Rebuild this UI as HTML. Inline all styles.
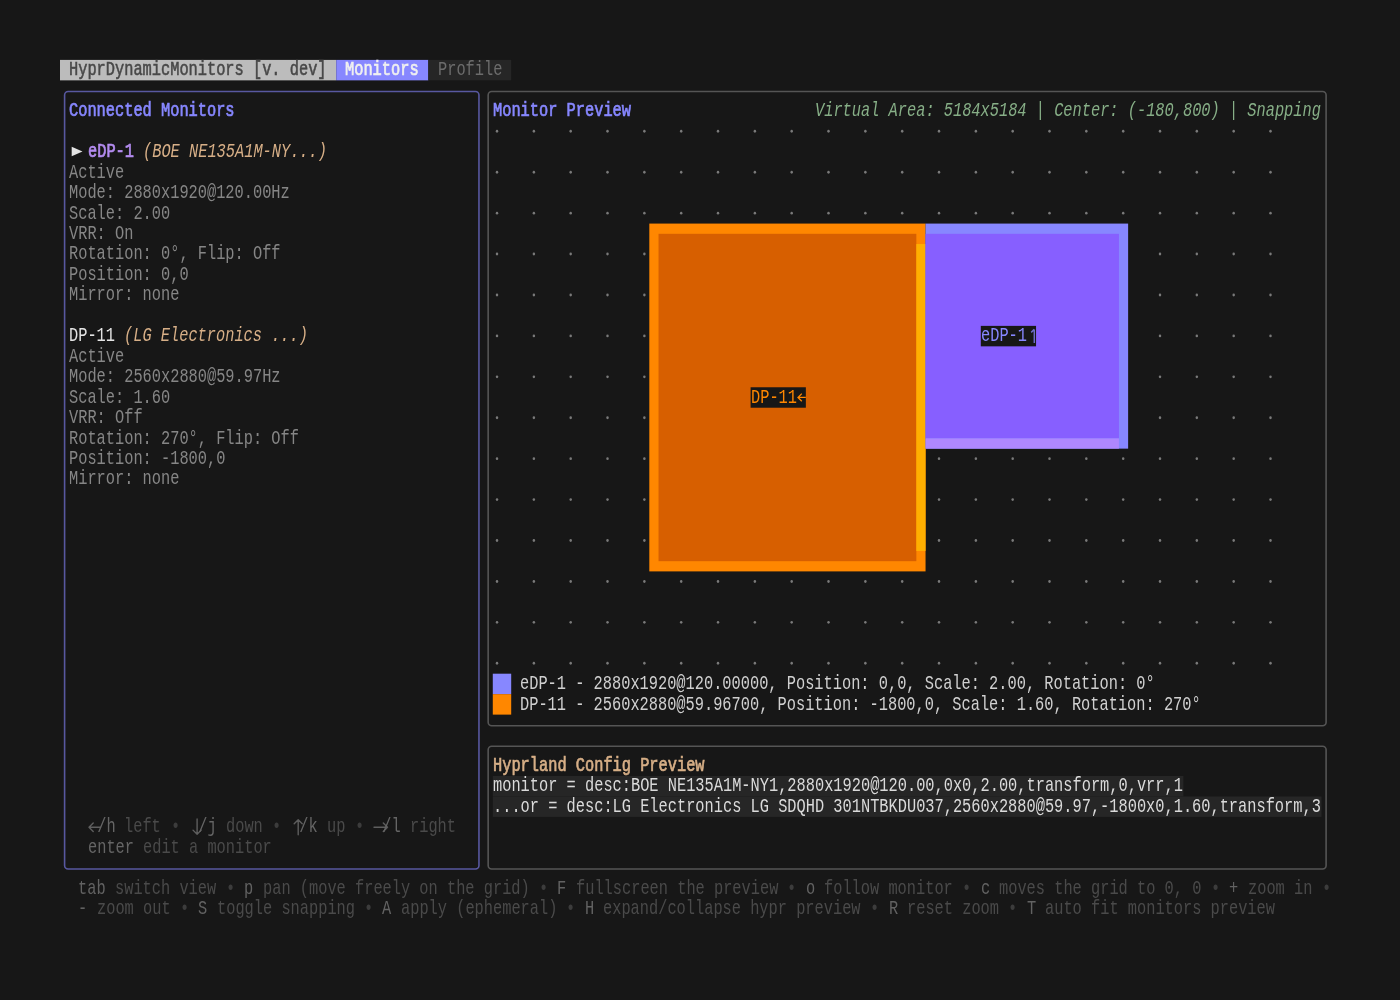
<!DOCTYPE html>
<html><head><meta charset="utf-8"><style>
html,body{margin:0;padding:0;background:#171717;width:1400px;height:1000px;overflow:hidden;}
svg{position:absolute;left:0;top:0;}
.t{position:absolute;white-space:pre;font-family:"Liberation Mono",monospace;font-size:15.344px;line-height:28px;height:28px;transform:scaleY(1.27);transform-origin:0 18px;will-change:transform;}
</style></head><body>
<svg width="1400" height="1000" viewBox="0 0 1400 1000">
<rect x="60.00" y="59.90" width="276.24" height="20.46" fill="#bcbcbc"/>
<rect x="336.24" y="59.90" width="92.08" height="20.46" fill="#8787ff"/>
<rect x="428.32" y="59.90" width="82.87" height="20.46" fill="#262626"/>
<rect x="64.60" y="91.49" width="414.36" height="777.48" rx="3.5" ry="3.5" fill="none" stroke="#5858a0" stroke-width="1.6"/>
<rect x="488.17" y="91.49" width="837.93" height="634.26" rx="3.5" ry="3.5" fill="none" stroke="#555555" stroke-width="1.6"/>
<rect x="488.17" y="746.21" width="837.93" height="122.76" rx="3.5" ry="3.5" fill="none" stroke="#555555" stroke-width="1.6"/>
<polygon points="71.7,146.74 82.5,151.44 71.7,156.14" fill="#e4e4e4"/>
<path d="M100.5,827.22 H89 M93.2,823.02 L89,827.22 L93.2,831.42 M197.1,818.92 V834.22 M193,830.12 L197.1,834.22 L201.2,830.12 M298.2,834.72 V819.72 M294.2,823.72 L298.2,819.72 L302.2,823.72 M374,827.22 H387.5 M383.3,823.02 L387.5,827.22 L383.3,831.42" stroke="#5e5e5e" stroke-width="1.4" fill="none" stroke-linecap="round" stroke-linejoin="round"/>
<ellipse cx="497.03" cy="131.31" rx="1.25" ry="1.45" fill="#7a7a7a"/>
<ellipse cx="533.86" cy="131.31" rx="1.25" ry="1.45" fill="#7a7a7a"/>
<ellipse cx="570.69" cy="131.31" rx="1.25" ry="1.45" fill="#7a7a7a"/>
<ellipse cx="607.53" cy="131.31" rx="1.25" ry="1.45" fill="#7a7a7a"/>
<ellipse cx="644.36" cy="131.31" rx="1.25" ry="1.45" fill="#7a7a7a"/>
<ellipse cx="681.19" cy="131.31" rx="1.25" ry="1.45" fill="#7a7a7a"/>
<ellipse cx="718.02" cy="131.31" rx="1.25" ry="1.45" fill="#7a7a7a"/>
<ellipse cx="754.85" cy="131.31" rx="1.25" ry="1.45" fill="#7a7a7a"/>
<ellipse cx="791.69" cy="131.31" rx="1.25" ry="1.45" fill="#7a7a7a"/>
<ellipse cx="828.52" cy="131.31" rx="1.25" ry="1.45" fill="#7a7a7a"/>
<ellipse cx="865.35" cy="131.31" rx="1.25" ry="1.45" fill="#7a7a7a"/>
<ellipse cx="902.18" cy="131.31" rx="1.25" ry="1.45" fill="#7a7a7a"/>
<ellipse cx="939.01" cy="131.31" rx="1.25" ry="1.45" fill="#7a7a7a"/>
<ellipse cx="975.85" cy="131.31" rx="1.25" ry="1.45" fill="#7a7a7a"/>
<ellipse cx="1012.68" cy="131.31" rx="1.25" ry="1.45" fill="#7a7a7a"/>
<ellipse cx="1049.51" cy="131.31" rx="1.25" ry="1.45" fill="#7a7a7a"/>
<ellipse cx="1086.34" cy="131.31" rx="1.25" ry="1.45" fill="#7a7a7a"/>
<ellipse cx="1123.17" cy="131.31" rx="1.25" ry="1.45" fill="#7a7a7a"/>
<ellipse cx="1160.01" cy="131.31" rx="1.25" ry="1.45" fill="#7a7a7a"/>
<ellipse cx="1196.84" cy="131.31" rx="1.25" ry="1.45" fill="#7a7a7a"/>
<ellipse cx="1233.67" cy="131.31" rx="1.25" ry="1.45" fill="#7a7a7a"/>
<ellipse cx="1270.50" cy="131.31" rx="1.25" ry="1.45" fill="#7a7a7a"/>
<ellipse cx="497.03" cy="172.23" rx="1.25" ry="1.45" fill="#7a7a7a"/>
<ellipse cx="533.86" cy="172.23" rx="1.25" ry="1.45" fill="#7a7a7a"/>
<ellipse cx="570.69" cy="172.23" rx="1.25" ry="1.45" fill="#7a7a7a"/>
<ellipse cx="607.53" cy="172.23" rx="1.25" ry="1.45" fill="#7a7a7a"/>
<ellipse cx="644.36" cy="172.23" rx="1.25" ry="1.45" fill="#7a7a7a"/>
<ellipse cx="681.19" cy="172.23" rx="1.25" ry="1.45" fill="#7a7a7a"/>
<ellipse cx="718.02" cy="172.23" rx="1.25" ry="1.45" fill="#7a7a7a"/>
<ellipse cx="754.85" cy="172.23" rx="1.25" ry="1.45" fill="#7a7a7a"/>
<ellipse cx="791.69" cy="172.23" rx="1.25" ry="1.45" fill="#7a7a7a"/>
<ellipse cx="828.52" cy="172.23" rx="1.25" ry="1.45" fill="#7a7a7a"/>
<ellipse cx="865.35" cy="172.23" rx="1.25" ry="1.45" fill="#7a7a7a"/>
<ellipse cx="902.18" cy="172.23" rx="1.25" ry="1.45" fill="#7a7a7a"/>
<ellipse cx="939.01" cy="172.23" rx="1.25" ry="1.45" fill="#7a7a7a"/>
<ellipse cx="975.85" cy="172.23" rx="1.25" ry="1.45" fill="#7a7a7a"/>
<ellipse cx="1012.68" cy="172.23" rx="1.25" ry="1.45" fill="#7a7a7a"/>
<ellipse cx="1049.51" cy="172.23" rx="1.25" ry="1.45" fill="#7a7a7a"/>
<ellipse cx="1086.34" cy="172.23" rx="1.25" ry="1.45" fill="#7a7a7a"/>
<ellipse cx="1123.17" cy="172.23" rx="1.25" ry="1.45" fill="#7a7a7a"/>
<ellipse cx="1160.01" cy="172.23" rx="1.25" ry="1.45" fill="#7a7a7a"/>
<ellipse cx="1196.84" cy="172.23" rx="1.25" ry="1.45" fill="#7a7a7a"/>
<ellipse cx="1233.67" cy="172.23" rx="1.25" ry="1.45" fill="#7a7a7a"/>
<ellipse cx="1270.50" cy="172.23" rx="1.25" ry="1.45" fill="#7a7a7a"/>
<ellipse cx="497.03" cy="213.15" rx="1.25" ry="1.45" fill="#7a7a7a"/>
<ellipse cx="533.86" cy="213.15" rx="1.25" ry="1.45" fill="#7a7a7a"/>
<ellipse cx="570.69" cy="213.15" rx="1.25" ry="1.45" fill="#7a7a7a"/>
<ellipse cx="607.53" cy="213.15" rx="1.25" ry="1.45" fill="#7a7a7a"/>
<ellipse cx="644.36" cy="213.15" rx="1.25" ry="1.45" fill="#7a7a7a"/>
<ellipse cx="681.19" cy="213.15" rx="1.25" ry="1.45" fill="#7a7a7a"/>
<ellipse cx="718.02" cy="213.15" rx="1.25" ry="1.45" fill="#7a7a7a"/>
<ellipse cx="754.85" cy="213.15" rx="1.25" ry="1.45" fill="#7a7a7a"/>
<ellipse cx="791.69" cy="213.15" rx="1.25" ry="1.45" fill="#7a7a7a"/>
<ellipse cx="828.52" cy="213.15" rx="1.25" ry="1.45" fill="#7a7a7a"/>
<ellipse cx="865.35" cy="213.15" rx="1.25" ry="1.45" fill="#7a7a7a"/>
<ellipse cx="902.18" cy="213.15" rx="1.25" ry="1.45" fill="#7a7a7a"/>
<ellipse cx="939.01" cy="213.15" rx="1.25" ry="1.45" fill="#7a7a7a"/>
<ellipse cx="975.85" cy="213.15" rx="1.25" ry="1.45" fill="#7a7a7a"/>
<ellipse cx="1012.68" cy="213.15" rx="1.25" ry="1.45" fill="#7a7a7a"/>
<ellipse cx="1049.51" cy="213.15" rx="1.25" ry="1.45" fill="#7a7a7a"/>
<ellipse cx="1086.34" cy="213.15" rx="1.25" ry="1.45" fill="#7a7a7a"/>
<ellipse cx="1123.17" cy="213.15" rx="1.25" ry="1.45" fill="#7a7a7a"/>
<ellipse cx="1160.01" cy="213.15" rx="1.25" ry="1.45" fill="#7a7a7a"/>
<ellipse cx="1196.84" cy="213.15" rx="1.25" ry="1.45" fill="#7a7a7a"/>
<ellipse cx="1233.67" cy="213.15" rx="1.25" ry="1.45" fill="#7a7a7a"/>
<ellipse cx="1270.50" cy="213.15" rx="1.25" ry="1.45" fill="#7a7a7a"/>
<ellipse cx="497.03" cy="254.07" rx="1.25" ry="1.45" fill="#7a7a7a"/>
<ellipse cx="533.86" cy="254.07" rx="1.25" ry="1.45" fill="#7a7a7a"/>
<ellipse cx="570.69" cy="254.07" rx="1.25" ry="1.45" fill="#7a7a7a"/>
<ellipse cx="607.53" cy="254.07" rx="1.25" ry="1.45" fill="#7a7a7a"/>
<ellipse cx="644.36" cy="254.07" rx="1.25" ry="1.45" fill="#7a7a7a"/>
<ellipse cx="1160.01" cy="254.07" rx="1.25" ry="1.45" fill="#7a7a7a"/>
<ellipse cx="1196.84" cy="254.07" rx="1.25" ry="1.45" fill="#7a7a7a"/>
<ellipse cx="1233.67" cy="254.07" rx="1.25" ry="1.45" fill="#7a7a7a"/>
<ellipse cx="1270.50" cy="254.07" rx="1.25" ry="1.45" fill="#7a7a7a"/>
<ellipse cx="497.03" cy="294.99" rx="1.25" ry="1.45" fill="#7a7a7a"/>
<ellipse cx="533.86" cy="294.99" rx="1.25" ry="1.45" fill="#7a7a7a"/>
<ellipse cx="570.69" cy="294.99" rx="1.25" ry="1.45" fill="#7a7a7a"/>
<ellipse cx="607.53" cy="294.99" rx="1.25" ry="1.45" fill="#7a7a7a"/>
<ellipse cx="644.36" cy="294.99" rx="1.25" ry="1.45" fill="#7a7a7a"/>
<ellipse cx="1160.01" cy="294.99" rx="1.25" ry="1.45" fill="#7a7a7a"/>
<ellipse cx="1196.84" cy="294.99" rx="1.25" ry="1.45" fill="#7a7a7a"/>
<ellipse cx="1233.67" cy="294.99" rx="1.25" ry="1.45" fill="#7a7a7a"/>
<ellipse cx="1270.50" cy="294.99" rx="1.25" ry="1.45" fill="#7a7a7a"/>
<ellipse cx="497.03" cy="335.91" rx="1.25" ry="1.45" fill="#7a7a7a"/>
<ellipse cx="533.86" cy="335.91" rx="1.25" ry="1.45" fill="#7a7a7a"/>
<ellipse cx="570.69" cy="335.91" rx="1.25" ry="1.45" fill="#7a7a7a"/>
<ellipse cx="607.53" cy="335.91" rx="1.25" ry="1.45" fill="#7a7a7a"/>
<ellipse cx="644.36" cy="335.91" rx="1.25" ry="1.45" fill="#7a7a7a"/>
<ellipse cx="1160.01" cy="335.91" rx="1.25" ry="1.45" fill="#7a7a7a"/>
<ellipse cx="1196.84" cy="335.91" rx="1.25" ry="1.45" fill="#7a7a7a"/>
<ellipse cx="1233.67" cy="335.91" rx="1.25" ry="1.45" fill="#7a7a7a"/>
<ellipse cx="1270.50" cy="335.91" rx="1.25" ry="1.45" fill="#7a7a7a"/>
<ellipse cx="497.03" cy="376.83" rx="1.25" ry="1.45" fill="#7a7a7a"/>
<ellipse cx="533.86" cy="376.83" rx="1.25" ry="1.45" fill="#7a7a7a"/>
<ellipse cx="570.69" cy="376.83" rx="1.25" ry="1.45" fill="#7a7a7a"/>
<ellipse cx="607.53" cy="376.83" rx="1.25" ry="1.45" fill="#7a7a7a"/>
<ellipse cx="644.36" cy="376.83" rx="1.25" ry="1.45" fill="#7a7a7a"/>
<ellipse cx="1160.01" cy="376.83" rx="1.25" ry="1.45" fill="#7a7a7a"/>
<ellipse cx="1196.84" cy="376.83" rx="1.25" ry="1.45" fill="#7a7a7a"/>
<ellipse cx="1233.67" cy="376.83" rx="1.25" ry="1.45" fill="#7a7a7a"/>
<ellipse cx="1270.50" cy="376.83" rx="1.25" ry="1.45" fill="#7a7a7a"/>
<ellipse cx="497.03" cy="417.75" rx="1.25" ry="1.45" fill="#7a7a7a"/>
<ellipse cx="533.86" cy="417.75" rx="1.25" ry="1.45" fill="#7a7a7a"/>
<ellipse cx="570.69" cy="417.75" rx="1.25" ry="1.45" fill="#7a7a7a"/>
<ellipse cx="607.53" cy="417.75" rx="1.25" ry="1.45" fill="#7a7a7a"/>
<ellipse cx="644.36" cy="417.75" rx="1.25" ry="1.45" fill="#7a7a7a"/>
<ellipse cx="1160.01" cy="417.75" rx="1.25" ry="1.45" fill="#7a7a7a"/>
<ellipse cx="1196.84" cy="417.75" rx="1.25" ry="1.45" fill="#7a7a7a"/>
<ellipse cx="1233.67" cy="417.75" rx="1.25" ry="1.45" fill="#7a7a7a"/>
<ellipse cx="1270.50" cy="417.75" rx="1.25" ry="1.45" fill="#7a7a7a"/>
<ellipse cx="497.03" cy="458.67" rx="1.25" ry="1.45" fill="#7a7a7a"/>
<ellipse cx="533.86" cy="458.67" rx="1.25" ry="1.45" fill="#7a7a7a"/>
<ellipse cx="570.69" cy="458.67" rx="1.25" ry="1.45" fill="#7a7a7a"/>
<ellipse cx="607.53" cy="458.67" rx="1.25" ry="1.45" fill="#7a7a7a"/>
<ellipse cx="644.36" cy="458.67" rx="1.25" ry="1.45" fill="#7a7a7a"/>
<ellipse cx="939.01" cy="458.67" rx="1.25" ry="1.45" fill="#7a7a7a"/>
<ellipse cx="975.85" cy="458.67" rx="1.25" ry="1.45" fill="#7a7a7a"/>
<ellipse cx="1012.68" cy="458.67" rx="1.25" ry="1.45" fill="#7a7a7a"/>
<ellipse cx="1049.51" cy="458.67" rx="1.25" ry="1.45" fill="#7a7a7a"/>
<ellipse cx="1086.34" cy="458.67" rx="1.25" ry="1.45" fill="#7a7a7a"/>
<ellipse cx="1123.17" cy="458.67" rx="1.25" ry="1.45" fill="#7a7a7a"/>
<ellipse cx="1160.01" cy="458.67" rx="1.25" ry="1.45" fill="#7a7a7a"/>
<ellipse cx="1196.84" cy="458.67" rx="1.25" ry="1.45" fill="#7a7a7a"/>
<ellipse cx="1233.67" cy="458.67" rx="1.25" ry="1.45" fill="#7a7a7a"/>
<ellipse cx="1270.50" cy="458.67" rx="1.25" ry="1.45" fill="#7a7a7a"/>
<ellipse cx="497.03" cy="499.59" rx="1.25" ry="1.45" fill="#7a7a7a"/>
<ellipse cx="533.86" cy="499.59" rx="1.25" ry="1.45" fill="#7a7a7a"/>
<ellipse cx="570.69" cy="499.59" rx="1.25" ry="1.45" fill="#7a7a7a"/>
<ellipse cx="607.53" cy="499.59" rx="1.25" ry="1.45" fill="#7a7a7a"/>
<ellipse cx="644.36" cy="499.59" rx="1.25" ry="1.45" fill="#7a7a7a"/>
<ellipse cx="939.01" cy="499.59" rx="1.25" ry="1.45" fill="#7a7a7a"/>
<ellipse cx="975.85" cy="499.59" rx="1.25" ry="1.45" fill="#7a7a7a"/>
<ellipse cx="1012.68" cy="499.59" rx="1.25" ry="1.45" fill="#7a7a7a"/>
<ellipse cx="1049.51" cy="499.59" rx="1.25" ry="1.45" fill="#7a7a7a"/>
<ellipse cx="1086.34" cy="499.59" rx="1.25" ry="1.45" fill="#7a7a7a"/>
<ellipse cx="1123.17" cy="499.59" rx="1.25" ry="1.45" fill="#7a7a7a"/>
<ellipse cx="1160.01" cy="499.59" rx="1.25" ry="1.45" fill="#7a7a7a"/>
<ellipse cx="1196.84" cy="499.59" rx="1.25" ry="1.45" fill="#7a7a7a"/>
<ellipse cx="1233.67" cy="499.59" rx="1.25" ry="1.45" fill="#7a7a7a"/>
<ellipse cx="1270.50" cy="499.59" rx="1.25" ry="1.45" fill="#7a7a7a"/>
<ellipse cx="497.03" cy="540.51" rx="1.25" ry="1.45" fill="#7a7a7a"/>
<ellipse cx="533.86" cy="540.51" rx="1.25" ry="1.45" fill="#7a7a7a"/>
<ellipse cx="570.69" cy="540.51" rx="1.25" ry="1.45" fill="#7a7a7a"/>
<ellipse cx="607.53" cy="540.51" rx="1.25" ry="1.45" fill="#7a7a7a"/>
<ellipse cx="644.36" cy="540.51" rx="1.25" ry="1.45" fill="#7a7a7a"/>
<ellipse cx="939.01" cy="540.51" rx="1.25" ry="1.45" fill="#7a7a7a"/>
<ellipse cx="975.85" cy="540.51" rx="1.25" ry="1.45" fill="#7a7a7a"/>
<ellipse cx="1012.68" cy="540.51" rx="1.25" ry="1.45" fill="#7a7a7a"/>
<ellipse cx="1049.51" cy="540.51" rx="1.25" ry="1.45" fill="#7a7a7a"/>
<ellipse cx="1086.34" cy="540.51" rx="1.25" ry="1.45" fill="#7a7a7a"/>
<ellipse cx="1123.17" cy="540.51" rx="1.25" ry="1.45" fill="#7a7a7a"/>
<ellipse cx="1160.01" cy="540.51" rx="1.25" ry="1.45" fill="#7a7a7a"/>
<ellipse cx="1196.84" cy="540.51" rx="1.25" ry="1.45" fill="#7a7a7a"/>
<ellipse cx="1233.67" cy="540.51" rx="1.25" ry="1.45" fill="#7a7a7a"/>
<ellipse cx="1270.50" cy="540.51" rx="1.25" ry="1.45" fill="#7a7a7a"/>
<ellipse cx="497.03" cy="581.43" rx="1.25" ry="1.45" fill="#7a7a7a"/>
<ellipse cx="533.86" cy="581.43" rx="1.25" ry="1.45" fill="#7a7a7a"/>
<ellipse cx="570.69" cy="581.43" rx="1.25" ry="1.45" fill="#7a7a7a"/>
<ellipse cx="607.53" cy="581.43" rx="1.25" ry="1.45" fill="#7a7a7a"/>
<ellipse cx="644.36" cy="581.43" rx="1.25" ry="1.45" fill="#7a7a7a"/>
<ellipse cx="681.19" cy="581.43" rx="1.25" ry="1.45" fill="#7a7a7a"/>
<ellipse cx="718.02" cy="581.43" rx="1.25" ry="1.45" fill="#7a7a7a"/>
<ellipse cx="754.85" cy="581.43" rx="1.25" ry="1.45" fill="#7a7a7a"/>
<ellipse cx="791.69" cy="581.43" rx="1.25" ry="1.45" fill="#7a7a7a"/>
<ellipse cx="828.52" cy="581.43" rx="1.25" ry="1.45" fill="#7a7a7a"/>
<ellipse cx="865.35" cy="581.43" rx="1.25" ry="1.45" fill="#7a7a7a"/>
<ellipse cx="902.18" cy="581.43" rx="1.25" ry="1.45" fill="#7a7a7a"/>
<ellipse cx="939.01" cy="581.43" rx="1.25" ry="1.45" fill="#7a7a7a"/>
<ellipse cx="975.85" cy="581.43" rx="1.25" ry="1.45" fill="#7a7a7a"/>
<ellipse cx="1012.68" cy="581.43" rx="1.25" ry="1.45" fill="#7a7a7a"/>
<ellipse cx="1049.51" cy="581.43" rx="1.25" ry="1.45" fill="#7a7a7a"/>
<ellipse cx="1086.34" cy="581.43" rx="1.25" ry="1.45" fill="#7a7a7a"/>
<ellipse cx="1123.17" cy="581.43" rx="1.25" ry="1.45" fill="#7a7a7a"/>
<ellipse cx="1160.01" cy="581.43" rx="1.25" ry="1.45" fill="#7a7a7a"/>
<ellipse cx="1196.84" cy="581.43" rx="1.25" ry="1.45" fill="#7a7a7a"/>
<ellipse cx="1233.67" cy="581.43" rx="1.25" ry="1.45" fill="#7a7a7a"/>
<ellipse cx="1270.50" cy="581.43" rx="1.25" ry="1.45" fill="#7a7a7a"/>
<ellipse cx="497.03" cy="622.35" rx="1.25" ry="1.45" fill="#7a7a7a"/>
<ellipse cx="533.86" cy="622.35" rx="1.25" ry="1.45" fill="#7a7a7a"/>
<ellipse cx="570.69" cy="622.35" rx="1.25" ry="1.45" fill="#7a7a7a"/>
<ellipse cx="607.53" cy="622.35" rx="1.25" ry="1.45" fill="#7a7a7a"/>
<ellipse cx="644.36" cy="622.35" rx="1.25" ry="1.45" fill="#7a7a7a"/>
<ellipse cx="681.19" cy="622.35" rx="1.25" ry="1.45" fill="#7a7a7a"/>
<ellipse cx="718.02" cy="622.35" rx="1.25" ry="1.45" fill="#7a7a7a"/>
<ellipse cx="754.85" cy="622.35" rx="1.25" ry="1.45" fill="#7a7a7a"/>
<ellipse cx="791.69" cy="622.35" rx="1.25" ry="1.45" fill="#7a7a7a"/>
<ellipse cx="828.52" cy="622.35" rx="1.25" ry="1.45" fill="#7a7a7a"/>
<ellipse cx="865.35" cy="622.35" rx="1.25" ry="1.45" fill="#7a7a7a"/>
<ellipse cx="902.18" cy="622.35" rx="1.25" ry="1.45" fill="#7a7a7a"/>
<ellipse cx="939.01" cy="622.35" rx="1.25" ry="1.45" fill="#7a7a7a"/>
<ellipse cx="975.85" cy="622.35" rx="1.25" ry="1.45" fill="#7a7a7a"/>
<ellipse cx="1012.68" cy="622.35" rx="1.25" ry="1.45" fill="#7a7a7a"/>
<ellipse cx="1049.51" cy="622.35" rx="1.25" ry="1.45" fill="#7a7a7a"/>
<ellipse cx="1086.34" cy="622.35" rx="1.25" ry="1.45" fill="#7a7a7a"/>
<ellipse cx="1123.17" cy="622.35" rx="1.25" ry="1.45" fill="#7a7a7a"/>
<ellipse cx="1160.01" cy="622.35" rx="1.25" ry="1.45" fill="#7a7a7a"/>
<ellipse cx="1196.84" cy="622.35" rx="1.25" ry="1.45" fill="#7a7a7a"/>
<ellipse cx="1233.67" cy="622.35" rx="1.25" ry="1.45" fill="#7a7a7a"/>
<ellipse cx="1270.50" cy="622.35" rx="1.25" ry="1.45" fill="#7a7a7a"/>
<ellipse cx="497.03" cy="663.27" rx="1.25" ry="1.45" fill="#7a7a7a"/>
<ellipse cx="533.86" cy="663.27" rx="1.25" ry="1.45" fill="#7a7a7a"/>
<ellipse cx="570.69" cy="663.27" rx="1.25" ry="1.45" fill="#7a7a7a"/>
<ellipse cx="607.53" cy="663.27" rx="1.25" ry="1.45" fill="#7a7a7a"/>
<ellipse cx="644.36" cy="663.27" rx="1.25" ry="1.45" fill="#7a7a7a"/>
<ellipse cx="681.19" cy="663.27" rx="1.25" ry="1.45" fill="#7a7a7a"/>
<ellipse cx="718.02" cy="663.27" rx="1.25" ry="1.45" fill="#7a7a7a"/>
<ellipse cx="754.85" cy="663.27" rx="1.25" ry="1.45" fill="#7a7a7a"/>
<ellipse cx="791.69" cy="663.27" rx="1.25" ry="1.45" fill="#7a7a7a"/>
<ellipse cx="828.52" cy="663.27" rx="1.25" ry="1.45" fill="#7a7a7a"/>
<ellipse cx="865.35" cy="663.27" rx="1.25" ry="1.45" fill="#7a7a7a"/>
<ellipse cx="902.18" cy="663.27" rx="1.25" ry="1.45" fill="#7a7a7a"/>
<ellipse cx="939.01" cy="663.27" rx="1.25" ry="1.45" fill="#7a7a7a"/>
<ellipse cx="975.85" cy="663.27" rx="1.25" ry="1.45" fill="#7a7a7a"/>
<ellipse cx="1012.68" cy="663.27" rx="1.25" ry="1.45" fill="#7a7a7a"/>
<ellipse cx="1049.51" cy="663.27" rx="1.25" ry="1.45" fill="#7a7a7a"/>
<ellipse cx="1086.34" cy="663.27" rx="1.25" ry="1.45" fill="#7a7a7a"/>
<ellipse cx="1123.17" cy="663.27" rx="1.25" ry="1.45" fill="#7a7a7a"/>
<ellipse cx="1160.01" cy="663.27" rx="1.25" ry="1.45" fill="#7a7a7a"/>
<ellipse cx="1196.84" cy="663.27" rx="1.25" ry="1.45" fill="#7a7a7a"/>
<ellipse cx="1233.67" cy="663.27" rx="1.25" ry="1.45" fill="#7a7a7a"/>
<ellipse cx="1270.50" cy="663.27" rx="1.25" ry="1.45" fill="#7a7a7a"/>
<rect x="649.31" y="223.58" width="276.24" height="347.82" fill="#ff8700"/>
<rect x="658.52" y="233.81" width="257.82" height="327.36" fill="#d75f00"/>
<rect x="916.34" y="244.04" width="9.21" height="306.90" fill="#ffaf00"/>
<rect x="925.55" y="223.58" width="202.58" height="225.06" fill="#8787ff"/>
<rect x="925.55" y="233.81" width="193.37" height="204.60" fill="#875fff"/>
<rect x="925.55" y="438.41" width="193.37" height="10.23" fill="#af87ff"/>
<rect x="750.60" y="387.26" width="55.25" height="20.46" fill="#171717"/>
<path d="M805.8,397.46 H798 M801.8,393.66 L798,397.46 L801.8,401.26" stroke="#ff8700" stroke-width="1.3" fill="none"/>
<rect x="980.80" y="325.88" width="55.25" height="20.46" fill="#171717"/>
<path d="M1034.3,329.38 V342.88 M1031.2,332.38 L1034.3,329.38" stroke="#6c6cc8" stroke-width="1.5" fill="none"/>
<rect x="492.78" y="673.70" width="18.42" height="20.46" fill="#8787ff"/>
<rect x="492.78" y="694.16" width="18.42" height="20.46" fill="#ff8700"/>
<rect x="492.78" y="776.00" width="690.60" height="20.46" fill="#262626"/>
<rect x="492.78" y="796.46" width="828.72" height="20.46" fill="#262626"/>
</svg>
<div class="t" style="left:69.21px;top:57px;color:#484848;-webkit-text-stroke:0.45px #484848;">HyprDynamicMonitors [v. dev]</div>
<div class="t" style="left:345.45px;top:57px;color:#f0f0f0;-webkit-text-stroke:0.55px #f0f0f0;">Monitors</div>
<div class="t" style="left:437.53px;top:57px;color:#6c6c6c;">Profile</div>
<div class="t" style="left:69.21px;top:98px;color:#8787ff;-webkit-text-stroke:0.55px #8787ff;">Connected Monitors</div>
<div class="t" style="left:87.62px;top:139px;color:#b48cf0;-webkit-text-stroke:0.55px #b48cf0;">eDP-1</div>
<div class="t" style="left:142.87px;top:139px;color:#d7af87;font-style:italic;">(BOE NE135A1M-NY...)</div>
<div class="t" style="left:69.21px;top:160px;color:#868686;">Active</div>
<div class="t" style="left:69.21px;top:180px;color:#868686;">Mode: 2880x1920@120.00Hz</div>
<div class="t" style="left:69.21px;top:201px;color:#868686;">Scale: 2.00</div>
<div class="t" style="left:69.21px;top:221px;color:#868686;">VRR: On</div>
<div class="t" style="left:69.21px;top:241px;color:#868686;">Rotation: 0°, Flip: Off</div>
<div class="t" style="left:69.21px;top:262px;color:#868686;">Position: 0,0</div>
<div class="t" style="left:69.21px;top:282px;color:#868686;">Mirror: none</div>
<div class="t" style="left:69.21px;top:323px;color:#e4e4e4;">DP-11</div>
<div class="t" style="left:124.46px;top:323px;color:#d7af87;font-style:italic;">(LG Electronics ...)</div>
<div class="t" style="left:69.21px;top:344px;color:#868686;">Active</div>
<div class="t" style="left:69.21px;top:364px;color:#868686;">Mode: 2560x2880@59.97Hz</div>
<div class="t" style="left:69.21px;top:385px;color:#868686;">Scale: 1.60</div>
<div class="t" style="left:69.21px;top:405px;color:#868686;">VRR: Off</div>
<div class="t" style="left:69.21px;top:426px;color:#868686;">Rotation: 270°, Flip: Off</div>
<div class="t" style="left:69.21px;top:446px;color:#868686;">Position: -1800,0</div>
<div class="t" style="left:69.21px;top:466px;color:#868686;">Mirror: none</div>
<div class="t" style="left:87.62px;top:814px;color:#656565;"> /h</div>
<div class="t" style="left:124.46px;top:814px;color:#4a4a4a;">left</div>
<div class="t" style="left:170.50px;top:814px;color:#3c3c3c;">•</div>
<div class="t" style="left:188.91px;top:814px;color:#656565;"> /j</div>
<div class="t" style="left:225.74px;top:814px;color:#4a4a4a;">down</div>
<div class="t" style="left:271.78px;top:814px;color:#3c3c3c;">•</div>
<div class="t" style="left:290.20px;top:814px;color:#656565;"> /k</div>
<div class="t" style="left:327.03px;top:814px;color:#4a4a4a;">up</div>
<div class="t" style="left:354.66px;top:814px;color:#3c3c3c;">•</div>
<div class="t" style="left:373.07px;top:814px;color:#656565;"> /l</div>
<div class="t" style="left:409.90px;top:814px;color:#4a4a4a;">right</div>
<div class="t" style="left:87.62px;top:835px;color:#656565;">enter</div>
<div class="t" style="left:142.87px;top:835px;color:#4a4a4a;">edit a monitor</div>
<div class="t" style="left:492.78px;top:98px;color:#8787ff;-webkit-text-stroke:0.55px #8787ff;">Monitor Preview</div>
<div class="t" style="left:815.06px;top:98px;color:#87af87;font-style:italic;">Virtual Area: 5184x5184 | Center: (-180,800) | Snapping</div>
<div class="t" style="left:750.60px;top:385px;color:#ff8700;">DP-11</div>
<div class="t" style="left:980.80px;top:323px;color:#8787ff;">eDP-1</div>
<div class="t" style="left:520.40px;top:671px;color:#d0d0d0;">eDP-1 - 2880x1920@120.00000, Position: 0,0, Scale: 2.00, Rotation: 0°</div>
<div class="t" style="left:520.40px;top:692px;color:#d0d0d0;">DP-11 - 2560x2880@59.96700, Position: -1800,0, Scale: 1.60, Rotation: 270°</div>
<div class="t" style="left:492.78px;top:753px;color:#d7af87;-webkit-text-stroke:0.55px #d7af87;">Hyprland Config Preview</div>
<div class="t" style="left:492.78px;top:773px;color:#dadada;">monitor = desc:BOE NE135A1M-NY1,2880x1920@120.00,0x0,2.00,transform,0,vrr,1</div>
<div class="t" style="left:492.78px;top:794px;color:#dadada;">...or = desc:LG Electronics LG SDQHD 301NTBKDU037,2560x2880@59.97,-1800x0,1.60,transform,3</div>
<div class="t" style="left:78.42px;top:876px;color:#626262;">tab</div>
<div class="t" style="left:115.25px;top:876px;color:#4a4a4a;">switch view</div>
<div class="t" style="left:225.74px;top:876px;color:#3c3c3c;">•</div>
<div class="t" style="left:244.16px;top:876px;color:#626262;">p</div>
<div class="t" style="left:262.58px;top:876px;color:#4a4a4a;">pan (move freely on the grid)</div>
<div class="t" style="left:538.82px;top:876px;color:#3c3c3c;">•</div>
<div class="t" style="left:557.23px;top:876px;color:#626262;">F</div>
<div class="t" style="left:575.65px;top:876px;color:#4a4a4a;">fullscreen the preview</div>
<div class="t" style="left:787.43px;top:876px;color:#3c3c3c;">•</div>
<div class="t" style="left:805.85px;top:876px;color:#626262;">o</div>
<div class="t" style="left:824.26px;top:876px;color:#4a4a4a;">follow monitor</div>
<div class="t" style="left:962.38px;top:876px;color:#3c3c3c;">•</div>
<div class="t" style="left:980.80px;top:876px;color:#626262;">c</div>
<div class="t" style="left:999.22px;top:876px;color:#4a4a4a;">moves the grid to 0, 0</div>
<div class="t" style="left:1211.00px;top:876px;color:#3c3c3c;">•</div>
<div class="t" style="left:1229.42px;top:876px;color:#626262;">+</div>
<div class="t" style="left:1247.83px;top:876px;color:#4a4a4a;">zoom in</div>
<div class="t" style="left:1321.50px;top:876px;color:#3c3c3c;">•</div>
<div class="t" style="left:78.42px;top:896px;color:#626262;">-</div>
<div class="t" style="left:96.83px;top:896px;color:#4a4a4a;">zoom out</div>
<div class="t" style="left:179.70px;top:896px;color:#3c3c3c;">•</div>
<div class="t" style="left:198.12px;top:896px;color:#626262;">S</div>
<div class="t" style="left:216.54px;top:896px;color:#4a4a4a;">toggle snapping</div>
<div class="t" style="left:363.86px;top:896px;color:#3c3c3c;">•</div>
<div class="t" style="left:382.28px;top:896px;color:#626262;">A</div>
<div class="t" style="left:400.70px;top:896px;color:#4a4a4a;">apply (ephemeral)</div>
<div class="t" style="left:566.44px;top:896px;color:#3c3c3c;">•</div>
<div class="t" style="left:584.86px;top:896px;color:#626262;">H</div>
<div class="t" style="left:603.27px;top:896px;color:#4a4a4a;">expand/collapse hypr preview</div>
<div class="t" style="left:870.30px;top:896px;color:#3c3c3c;">•</div>
<div class="t" style="left:888.72px;top:896px;color:#626262;">R</div>
<div class="t" style="left:907.14px;top:896px;color:#4a4a4a;">reset zoom</div>
<div class="t" style="left:1008.42px;top:896px;color:#3c3c3c;">•</div>
<div class="t" style="left:1026.84px;top:896px;color:#626262;">T</div>
<div class="t" style="left:1045.26px;top:896px;color:#4a4a4a;">auto fit monitors preview</div>
</body></html>
